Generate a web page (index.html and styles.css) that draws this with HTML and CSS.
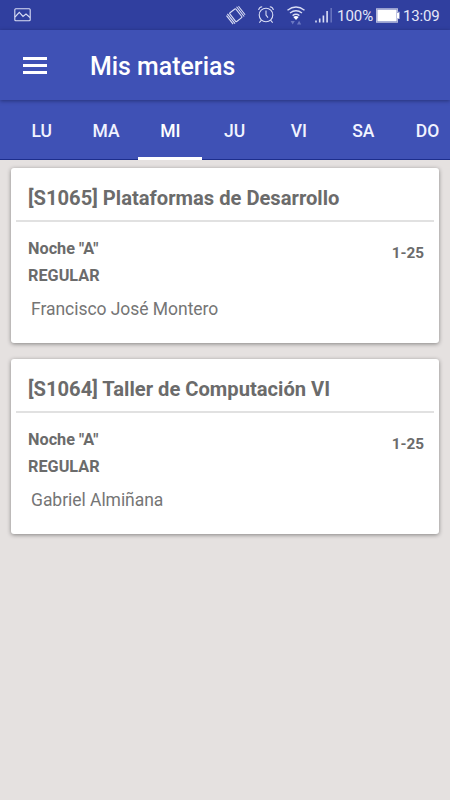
FILE: index.html
```html
<!DOCTYPE html>
<html lang="es">
<head>
<meta charset="utf-8">
<title>Mis materias</title>
<link rel="stylesheet" href="styles.css">
</head>
<body>
<div class="status">
  <svg class="picture" width="17" height="14" viewBox="0 0 17 14"><rect x=".8" y=".8" width="15.4" height="12" rx="1"/><path d="M1 9l4.3-4.6 3.7 4 3-2.4L16 9.5"/></svg>
  <svg class="system" width="112" height="30" viewBox="223 0 112 30">
    <g transform="translate(235.8 15.2) rotate(-38)"><rect x="-3.9" y="-5.5" width="7.8" height="11" rx=".8"/><path d="M-5.8-6.2V6.2M-7.6-5.4V5.4M5.8-6.2V6.2M7.6-5.4V5.4"/></g>
    <circle cx="266" cy="15" r="6.8"/><path d="M266 10.5V15l2 2.6M258.6 10a4 4 0 0 1 3.6-3.2M269.8 6.8a4 4 0 0 1 3.6 3.2M261.5 20.2l-2.2 2.4M270.5 20.2l2.2 2.4"/>
    <path class="wifi" d="M287.5 10.3q8.5-6.5 17 0M290 13q6-4.6 12 0M292.6 15.6q3.4-2.6 6.8 0"/>
    <path class="fill" d="M293.3 17q2.7-2 5.4 0L296 20z"/>
    <path class="dim" d="M290.6 21h4.2l-2.1 3.6zM297 24.4h4.2l-2.1-3.6z"/>
    <path class="bars" d="M316 22.5v-2M319.7 22.5v-4M323.4 22.5v-7M327.1 22.5V11"/><path class="bars faint" d="M331.2 22.5V8"/>
  </svg>
  <span class="percent">100%</span>
  <svg class="battery" width="24" height="15" viewBox="0 0 24 15"><path class="shell" d="M.6.8h20.8v3.5h1.7v6.2h-1.7v3.7H.6z"/><path class="fill" d="M1.3 1.5h19.4v12H1.3zM21 5h2v5h-2z"/></svg>
  <span class="clock">13:09</span>
</div>
<header class="toolbar">
  <div class="menu"><i></i><i></i><i></i></div>
  <h1>Mis materias</h1>
</header>
<nav class="tabs">
  <span>LU</span><span>MA</span><span class="active">MI</span><span>JU</span><span>VI</span><span>SA</span><span>DO</span>
</nav>
<main>
  <section class="card">
    <h2>[S1065] Plataformas de Desarrollo</h2>
    <div class="info">
      <div><p class="group">Noche "A"</p><p class="state">REGULAR</p><p class="teacher">Francisco José Montero</p></div>
      <span class="range">1-25</span>
    </div>
  </section>
  <section class="card">
    <h2>[S1064] Taller de Computación VI</h2>
    <div class="info">
      <div><p class="group">Noche "A"</p><p class="state">REGULAR</p><p class="teacher">Gabriel Almiñana</p></div>
      <span class="range">1-25</span>
    </div>
  </section>
</main>
</body>
</html>
```
FILE: styles.css
```css
* { box-sizing: border-box; }
body { margin: 0; width: 450px; height: 800px; overflow: hidden; background: #e5e1e0; font-family: Roboto, sans-serif; color: #6b6b6b; }
h1, h2, p { margin: 0; }
.status { height: 30px; background: #303f9f; display: flex; align-items: center; color: #e6e8f8; font-size: 15px; line-height: 30px; white-space: nowrap; }
svg { flex: none; fill: none; stroke: #dadef5; stroke-width: 1.1; }
.picture { margin-left: 14px; margin-right: 192px; }
.system .fill { fill: #fff; stroke: none; }
.system .wifi { stroke-width: 1.4; }
.system .dim { fill: #6b78c2; stroke: none; }
.bars { stroke-width: 1.6; }
.faint { stroke: #6672bd; }
.percent { width: 37px; margin-left: 2px; padding-top: 1px; }
.battery { margin-left: 2px; }
.battery .shell { stroke: #bcc1df; }
.battery .fill { fill: #fff; stroke: none; }
.clock { margin-left: 3px; padding-top: 1px; letter-spacing: -.15px; }
.toolbar { position: relative; height: 70px; background: #3f51b5; display: flex; align-items: center; padding-left: 23px; box-shadow: 0 1px 4px rgba(0,0,30,.4); }
.menu { width: 24px; height: 17px; display: flex; flex-direction: column; justify-content: space-between; }
.menu i { height: 3px; background: #fff; }
h1 { margin-left: 43px; padding-top: 2px; color: #fff; font-size: 24.9px; font-weight: 500; }
.tabs { height: 60px; background: #3f51b5; box-shadow: inset 0 -1px #1d2e8c; display: flex; padding-left: 9.6px; overflow: hidden; }
.tabs span { flex: 0 0 64.3px; height: 60px; line-height: 62px; text-align: center; color: #f1f3ff; font-size: 17.5px; font-weight: 500; }
.tabs .active { color: #fff; border-bottom: 3px solid #fff; }
main { padding: 8px 11px; display: flex; flex-direction: column; gap: 16px; }
.card { height: 175px; background: #fff; border-radius: 3px; padding: 0 5px; box-shadow: 0 1px 4px rgba(0,0,0,.42); }
h2 { height: 54px; border-bottom: 2px solid #e1e1e1; padding-left: 12px; line-height: 60px; font-size: 20.17px; font-weight: 700; white-space: nowrap; }
.info { display: flex; justify-content: space-between; padding: 13px 10px 0 12px; }
.group, .state { font-size: 16.25px; font-weight: 700; line-height: 27px; }
.teacher { padding-left: 3px; margin-top: 6px; font-size: 17.5px; letter-spacing: -.04px; line-height: 28px; color: #757575; }
.range { font-size: 15.3px; font-weight: 700; line-height: 37px; }
```
